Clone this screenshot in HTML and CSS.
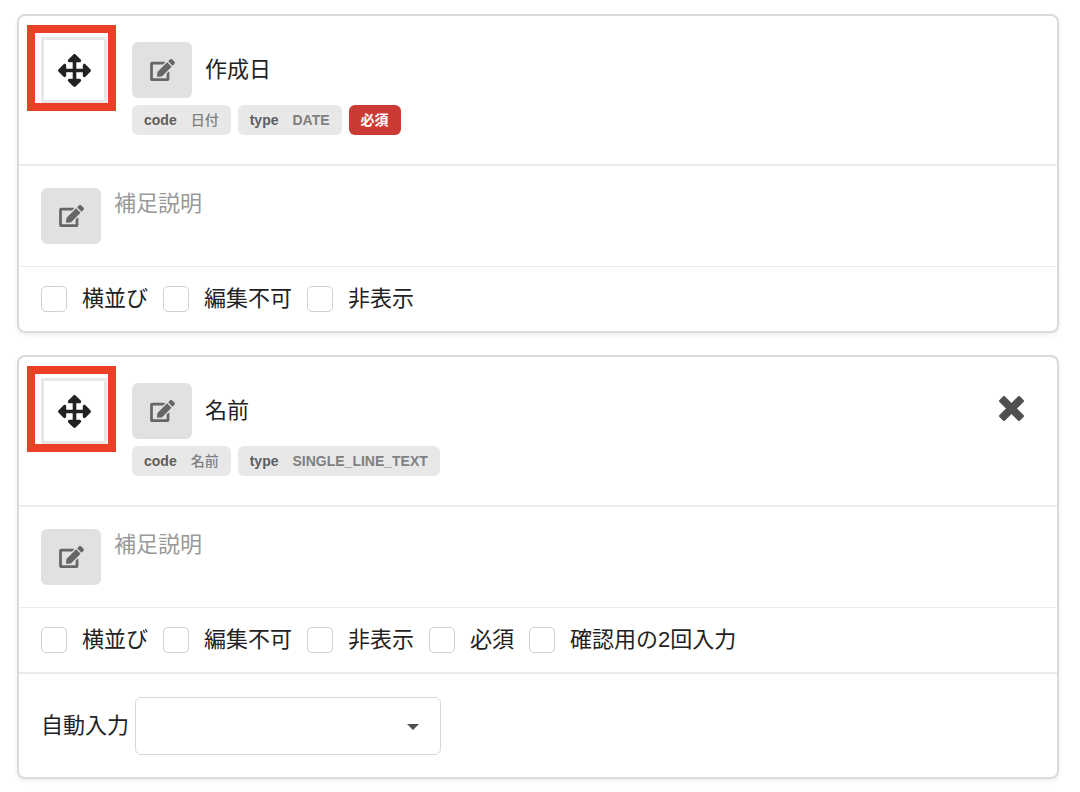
FILE: index.html
```html
<!DOCTYPE html>
<html lang="ja">
<head>
  <meta charset="UTF-8">
  <meta name="viewport" content="width=device-width, initial-scale=1.0">
  <title>フォーム項目の設定</title>
  <link rel="stylesheet" href="styles.css">
</head>
<body>

<!-- shared icons -->
<svg class="icon-defs" aria-hidden="true">
  <symbol id="icon-move" viewBox="0 0 512 512">
    <path d="M352.201 425.775l-79.196 79.196c-9.373 9.373-24.568 9.373-33.941 0l-79.196-79.196c-15.119-15.119-4.411-40.971 16.971-40.97h51.162L228 284H127.196v51.162c0 21.382-25.851 32.09-40.971 16.971L7.029 272.937c-9.373-9.373-9.373-24.569 0-33.941L86.225 159.8c15.119-15.119 40.971-4.411 40.971 16.971V228H228V127.196h-51.23c-21.382 0-32.09-25.851-16.971-40.971l79.196-79.196c9.373-9.373 24.568-9.373 33.941 0l79.196 79.196c15.119 15.119 4.411 40.971-16.971 40.971h-51.162V228h100.804v-51.162c0-21.382 25.851-32.09 40.97-16.971l79.196 79.196c9.373 9.373 9.373 24.569 0 33.941L425.773 352.2c-15.119 15.119-40.971 4.411-40.97-16.971V284H284v100.804h51.23c21.382 0 32.09 25.851 16.971 40.971z"/>
  </symbol>
  <symbol id="icon-edit" viewBox="0 0 576 512">
    <path d="M402.6 83.2l90.2 90.2c3.8 3.8 3.8 10 0 13.8L274.4 405.6l-92.8 10.3c-12.4 1.4-22.9-9.1-21.5-21.5l10.3-92.8L388.8 83.2c3.8-3.8 10-3.8 13.8 0zm162-22.9l-48.8-48.8c-15.2-15.2-39.9-15.2-55.2 0l-35.4 35.4c-3.8 3.8-3.8 10 0 13.8l90.2 90.2c3.8 3.8 10 3.8 13.8 0l35.4-35.4c15.2-15.3 15.2-40 0-55.2zM384 346.2V448H64V128h229.8c3.2 0 6.2-1.3 8.5-3.5l40-40c7.6-7.6 2.2-20.5-8.5-20.5H48C21.5 64 0 85.5 0 112v352c0 26.5 21.5 48 48 48h352c26.5 0 48-21.5 48-48V306.2c0-10.7-12.9-16-20.5-8.5l-40 40c-2.2 2.3-3.5 5.3-3.5 8.5z"/>
  </symbol>
  <symbol id="icon-close" viewBox="0 0 352 352">
    <g transform="rotate(45 176 176)">
      <rect x="-29" y="120" width="410" height="112" rx="22"/>
      <rect x="120" y="-29" width="112" height="410" rx="22"/>
    </g>
  </symbol>
</svg>

<main class="cards">
  <section class="card">
    <div class="head">
      <button type="button" class="handle" aria-label="移動">
        <svg><use href="#icon-move"/></svg>
        <span class="marker"></span>
      </button>
      <div class="info">
        <div class="title">
          <button type="button" class="edit" aria-label="項目名を編集"><svg><use href="#icon-edit"/></svg></button>
          <span>作成日</span>
        </div>
        <div class="labels">
          <span class="label">code <span class="detail name">日付</span></span>
          <span class="label">type <span class="detail">DATE</span></span>
          <span class="label red">必須</span>
        </div>
      </div>
    </div>
    <div class="note">
      <button type="button" class="edit" aria-label="補足説明を編集"><svg><use href="#icon-edit"/></svg></button>
      <span>補足説明</span>
    </div>
    <div class="options">
      <label><input type="checkbox"> 横並び</label>
      <label><input type="checkbox"> 編集不可</label>
      <label><input type="checkbox"> 非表示</label>
    </div>
  </section>

  <section class="card">
    <div class="head">
      <button type="button" class="handle" aria-label="移動">
        <svg><use href="#icon-move"/></svg>
        <span class="marker"></span>
      </button>
      <div class="info">
        <div class="title">
          <button type="button" class="edit" aria-label="項目名を編集"><svg><use href="#icon-edit"/></svg></button>
          <span>名前</span>
        </div>
        <div class="labels">
          <span class="label">code <span class="detail name">名前</span></span>
          <span class="label">type <span class="detail">SINGLE_LINE_TEXT</span></span>
        </div>
      </div>
      <button type="button" class="close" aria-label="削除"><svg><use href="#icon-close"/></svg></button>
    </div>
    <div class="note">
      <button type="button" class="edit" aria-label="補足説明を編集"><svg><use href="#icon-edit"/></svg></button>
      <span>補足説明</span>
    </div>
    <div class="options">
      <label><input type="checkbox"> 横並び</label>
      <label><input type="checkbox"> 編集不可</label>
      <label><input type="checkbox"> 非表示</label>
      <label><input type="checkbox"> 必須</label>
      <label><input type="checkbox"> 確認用の2回入力</label>
    </div>
    <div class="auto">
      <label for="auto-input">自動入力</label>
      <div class="dropdown">
        <select id="auto-input" name="auto-input">
          <option value=""></option>
        </select>
      </div>
    </div>
  </section>
</main>

</body>
</html>
```

FILE: styles.css
```css
* {
  box-sizing: border-box;
}

body {
  margin: 0;
  padding: 14px 21px 13px 17px;
  background-color: #fff;
  color: #222;
  font-family: "Liberation Sans", "Noto Sans CJK JP", sans-serif;
  font-size: 22px;
  line-height: 32px;
}

button {
  padding: 0;
  border: none;
  font: inherit;
  cursor: pointer;
}

svg {
  display: block;
  fill: currentColor;
}

.icon-defs {
  position: absolute;
  width: 0;
  height: 0;
}

.cards {
  display: flex;
  flex-direction: column;
  gap: 22px;
}

.card {
  border: 2px solid #dadadb;
  border-radius: 8px;
  box-shadow: 0 2px 4px rgba(34, 36, 38, 0.08);
}

.head {
  display: flex;
  align-items: flex-start;
  padding: 21px 22px 29px;
}

.handle {
  position: relative;
  display: flex;
  align-items: center;
  justify-content: center;
  width: 66px;
  height: 66px;
  margin-right: 25px;
  border: 3px solid #e8e8e8;
  background-color: #fff;
  color: #222;
  cursor: move;
}

.handle svg {
  width: 33px;
  height: 33px;
}

/* red frame drawn over the handle */
.marker {
  position: absolute;
  top: -15px;
  right: -12px;
  bottom: -11px;
  left: -17px;
  border: 8px solid #ec4026;
}

.info {
  flex: 1;
  padding-top: 5px;
}

.title {
  display: flex;
  align-items: center;
  gap: 13px;
}

.edit {
  display: flex;
  flex-shrink: 0;
  align-items: center;
  justify-content: center;
  width: 60px;
  height: 56px;
  border-radius: 6px;
  background-color: #e0e1e2;
  color: #666;
}

.edit:hover {
  background-color: #cacbcd;
}

.edit svg {
  width: 25px;
  height: 22px;
}

.labels {
  display: flex;
  gap: 7px;
  margin-top: 7px;
}

.label {
  display: flex;
  gap: 14px;
  padding: 0 12px;
  border-radius: 6px;
  background-color: #e8e8e8;
  color: #5e5e5e;
  font-size: 14px;
  font-weight: bold;
  line-height: 30px;
}

.detail {
  color: #808080;
}

.name {
  font-weight: 500;
}

.label.red {
  background-color: #cb3a35;
  color: #fff;
}

.close {
  padding: 18px 11px;
  background: none;
  color: #505050;
}

.close svg {
  width: 25px;
  height: 25px;
}

.note {
  display: flex;
  gap: 13px;
  padding: 22px;
  border-top: 2px solid #ebebeb;
  color: #999;
}

.options {
  display: flex;
  flex-wrap: wrap;
  gap: 15px;
  padding: 16px 22px;
  border-top: 1px solid #ebebeb;
}

.options label {
  display: flex;
  align-items: center;
  gap: 15px;
}

input[type="checkbox"] {
  appearance: none;
  width: 26px;
  height: 26px;
  margin: 0;
  border: 1px solid #d0d0d1;
  border-radius: 5px;
  background-color: #fff;
}

input[type="checkbox"]:checked {
  background-color: #666;
}

.auto {
  display: flex;
  align-items: center;
  gap: 6px;
  padding: 23px 22px 22px;
  border-top: 2px solid #ebebeb;
}

.dropdown {
  position: relative;
  width: 306px;
}

.dropdown::after {
  content: "";
  position: absolute;
  top: 27px;
  right: 22px;
  border-top: 6px solid #505050;
  border-right: 6px solid transparent;
  border-left: 6px solid transparent;
  pointer-events: none;
}

select {
  appearance: none;
  display: block;
  width: 100%;
  height: 58px;
  padding: 0 48px 0 20px;
  border: 1px solid #d8d8d9;
  border-radius: 6px;
  background-color: #fff;
  color: #222;
  font: inherit;
}
```
